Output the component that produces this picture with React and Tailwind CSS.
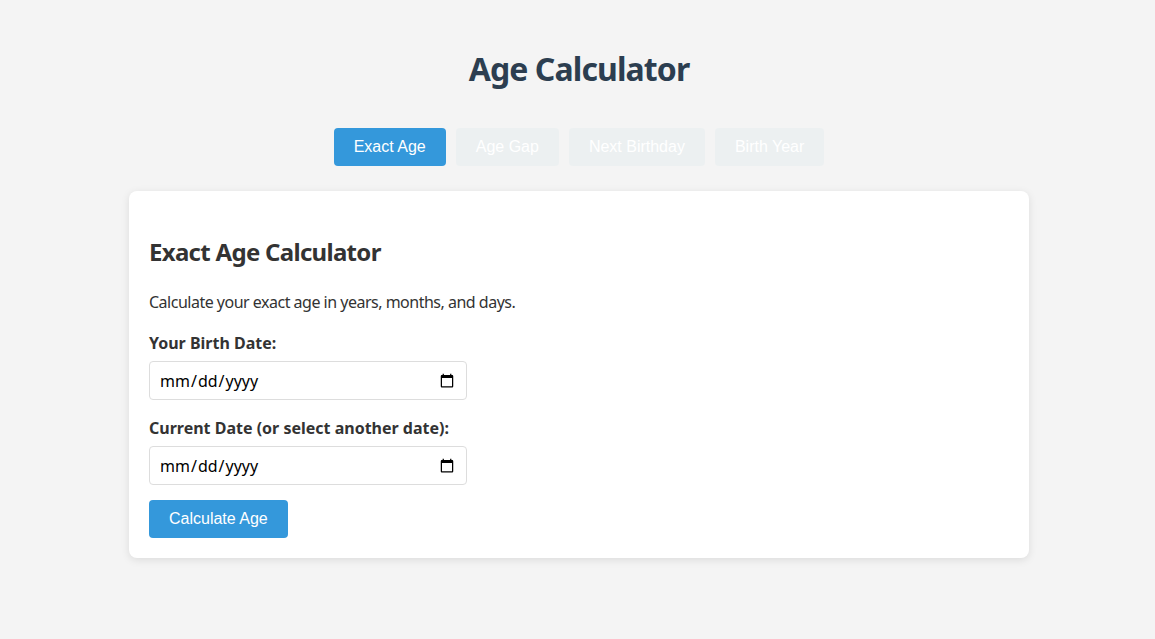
import { useState } from 'react'

const TABS = ['Exact Age', 'Age Gap', 'Next Birthday', 'Birth Year']

function DateField({ label }) {
  return (
    <div>
      <label className="block text-[16px] font-bold leading-6 text-[#333]">{label}</label>
      <input
        type="date"
        className="mt-[6px] block h-[39px] w-[318px] rounded-[4px] border border-[#ddd] bg-white px-[9px] text-[16px] text-black"
      />
    </div>
  )
}

export default function App() {
  const [active, setActive] = useState(0)

  return (
    <div className="min-h-[639px] bg-[#f4f4f4] pl-[3px] pt-[49px] font-['Noto_Sans',sans-serif]">
      <h1 className="text-center text-[32px] font-bold leading-10 tracking-[-0.9px] text-[#2c3e50]">
        Age Calculator
      </h1>

      <div className="mt-[39px] flex justify-center gap-[10px] font-['Liberation_Sans',Arial,sans-serif]">
        {TABS.map((tab, i) => (
          <button
            key={tab}
            onClick={() => setActive(i)}
            className={`h-[38px] rounded-[4px] px-5 text-[16px] text-white ${
              i === active ? 'bg-[#3498db]' : 'bg-[#ecf0f1]'
            }`}
          >
            {tab}
          </button>
        ))}
      </div>

      <div className="mx-auto mt-[25px] w-[900px] rounded-[8px] bg-white px-5 pb-5 pt-[45px] shadow-[0_2px_8px_rgba(0,0,0,0.1)]">
        <h2 className="text-[24px] font-bold leading-8 tracking-[-0.7px] text-[#333]">Exact Age Calculator</h2>
        <p className="mt-[22px] text-[16px] leading-6 tracking-[-0.5px] text-[#333]">
          Calculate your exact age in years, months, and days.
        </p>

        <div className="mt-[17px] flex flex-col gap-4">
          <DateField label="Your Birth Date:" />
          <DateField label="Current Date (or select another date):" />
        </div>

        <button className="mt-[15px] h-[38px] rounded-[4px] bg-[#3498db] px-5 font-['Liberation_Sans',Arial,sans-serif] text-[16px] text-white">
          Calculate Age
        </button>
      </div>
    </div>
  )
}
